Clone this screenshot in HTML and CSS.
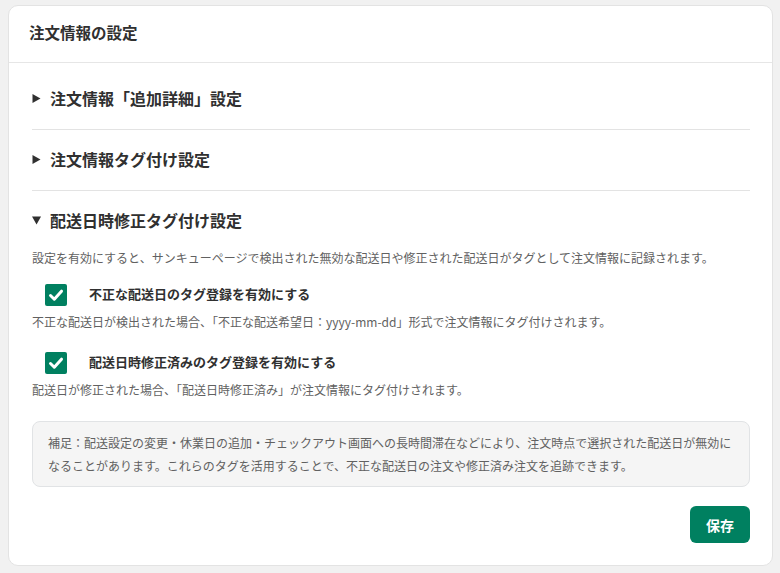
FILE: index.html
```html
<!DOCTYPE html>
<html lang="ja">
<head>
<meta charset="utf-8">
<title>注文情報の設定</title>
<link rel="stylesheet" href="styles.css">
</head>
<body>
<div class="card">
  <div class="card-header">
    <h2 class="card-title">注文情報の設定</h2>
  </div>
  <div class="card-body">
    <details class="section">
      <summary class="section-title"><svg class="caret" viewBox="0 0 9 9" width="9" height="9"><path d="M0.5 0 L8.5 4.5 L0.5 9 Z" fill="#303030"/></svg>注文情報「追加詳細」設定</summary>
    </details>
    <details class="section">
      <summary class="section-title"><svg class="caret" viewBox="0 0 9 9" width="9" height="9"><path d="M0.5 0 L8.5 4.5 L0.5 9 Z" fill="#303030"/></svg>注文情報タグ付け設定</summary>
    </details>
    <details class="section last" open>
      <summary class="section-title"><svg class="caret" viewBox="0 0 9 9" width="9" height="9"><path d="M0 0.5 L9 0.5 L4.5 8.5 Z" fill="#303030"/></svg>配送日時修正タグ付け設定</summary>
      <p class="desc">設定を有効にすると、サンキューページで検出された無効な配送日や修正された配送日がタグとして注文情報に記録されます。</p>
      <label class="check-row">
        <span class="checkbox"><svg viewBox="0 0 22 22" width="22" height="22"><path d="M5.5 11.5 L9.3 15.2 L16.5 7.2" fill="none" stroke="#fff" stroke-width="3" stroke-linecap="round" stroke-linejoin="round"/></svg></span>
        <span class="check-label">不正な配送日のタグ登録を有効にする</span>
      </label>
      <p class="help">不正な配送日が検出された場合、「不正な配送希望日：yyyy-mm-dd」形式で注文情報にタグ付けされます。</p>
      <label class="check-row second">
        <span class="checkbox"><svg viewBox="0 0 22 22" width="22" height="22"><path d="M5.5 11.5 L9.3 15.2 L16.5 7.2" fill="none" stroke="#fff" stroke-width="3" stroke-linecap="round" stroke-linejoin="round"/></svg></span>
        <span class="check-label">配送日時修正済みのタグ登録を有効にする</span>
      </label>
      <p class="help">配送日が修正された場合、「配送日時修正済み」が注文情報にタグ付けされます。</p>
      <div class="note">補足：配送設定の変更・休業日の追加・チェックアウト画面への長時間滞在などにより、注文時点で選択された配送日が無効になることがあります。これらのタグを活用することで、不正な配送日の注文や修正済み注文を追跡できます。</div>
    </details>
    <div class="actions">
      <button class="btn-primary" type="button">保存</button>
    </div>
  </div>
</div>
</body>
</html>
```

FILE: styles.css
```css
* { box-sizing: border-box; }
html, body { margin: 0; padding: 0; }
body {
  background: #f1f1f1;
  font-family: "Noto Sans CJK JP", "Noto Sans", sans-serif;
  color: #303030;
  padding: 5px 7px 0 8px;
}
.card {
  background: #fff;
  border: 1px solid #e3e3e3;
  border-radius: 10px;
  width: 765px;
  height: 561px;
}
.card-header {
  height: 57px;
  border-bottom: 1px solid #e6e6e6;
  padding: 0 20px 4px;
  display: flex;
  align-items: center;
}
.card-title {
  margin: 0;
  font-size: 15.5px;
  font-weight: 700;
  line-height: 24px;
  color: #303030;
}
.card-body {
  padding: 6px 22px 0 23px;
}
.section {
  border-bottom: 1px solid #e3e3e3;
}
.section.last { border-bottom: none; }
.section-title {
  list-style: none;
  display: flex;
  align-items: center;
  font-size: 16px;
  font-weight: 700;
  line-height: 24px;
  padding: 17px 0 19px;
  color: #303030;
  cursor: pointer;
}
.section-title::-webkit-details-marker { display: none; }
.caret {
  display: block;
  flex: none;
  margin-right: 9px;
}
.desc {
  margin: -2px 0 0;
  font-size: 12px;
  line-height: 18px;
  color: #616161;
}
.check-row {
  display: flex;
  align-items: center;
  margin-top: 17px;
  padding-left: 13px;
}
.check-row.second { margin-top: 21px; }
.checkbox {
  width: 22px;
  height: 22px;
  border-radius: 2px;
  background: #008060;
  display: inline-flex;
  flex: none;
}
.checkbox svg { display: block; }
.check-label {
  margin-left: 22px;
  font-size: 13px;
  font-weight: 700;
  line-height: 20px;
  color: #303030;
  position: relative;
  top: -1px;
}
.help {
  margin: 7px 0 0;
  font-size: 12px;
  line-height: 18px;
  color: #616161;
}
.note {
  margin-top: 22px;
  background: #f5f5f5;
  border: 1px solid #e1e3e5;
  border-radius: 8px;
  padding: 9px 12px 9px 15px;
  font-size: 12px;
  line-height: 23px;
  color: #616161;
}
.actions {
  display: flex;
  justify-content: flex-end;
  margin-top: 19px;
}
.btn-primary {
  width: 60px;
  height: 37px;
  border: none;
  border-radius: 6px;
  background: #008060;
  color: #fff;
  font-family: inherit;
  font-size: 14px;
  font-weight: 700;
  cursor: pointer;
}
```
